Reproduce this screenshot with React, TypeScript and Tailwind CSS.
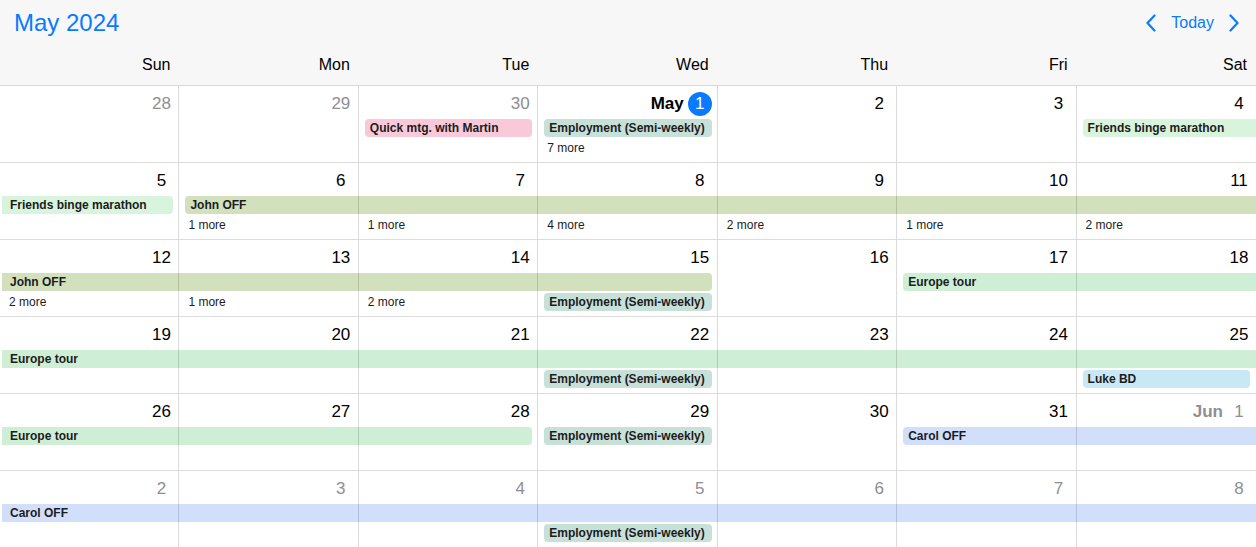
import React from "react";

type Ev = {
  title: string;
  col: number; // 1..7
  span: number;
  row: number; // 1..2
  color: string;
  contL?: boolean;
  contR?: boolean;
};

type Day = { n: string; gray?: boolean; today?: boolean; label?: string };

type Week = { days: Day[]; events: Ev[]; more: { col: number; text: string }[] };

const C = {
  pink: "bg-[#f9c9da]",
  teal: "bg-[#c7e0d8]",
  friends: "bg-[#d8f4dd]",
  john: "bg-[#d3e0bd]",
  europe: "bg-[#ceeed5]",
  luke: "bg-[#c9e8f5]",
  carol: "bg-[#d2dffb]",
};

const colStart = ["", "col-start-1", "col-start-2", "col-start-3", "col-start-4", "col-start-5", "col-start-6", "col-start-7"];
const colSpan = ["", "col-span-1", "col-span-2", "col-span-3", "col-span-4", "col-span-5", "col-span-6", "col-span-7"];
const rowStart = ["", "row-start-1", "row-start-2"];

const d = (n: number, gray = false): Day => ({ n: String(n), gray });

const weeks: Week[] = [
  {
    days: [d(28, true), d(29, true), d(30, true), { n: "1", today: true, label: "May" }, d(2), d(3), d(4)],
    events: [
      { title: "Quick mtg. with Martin", col: 3, span: 1, row: 1, color: C.pink },
      { title: "Employment (Semi-weekly)", col: 4, span: 1, row: 1, color: C.teal },
      { title: "Friends binge marathon", col: 7, span: 1, row: 1, color: C.friends, contR: true },
    ],
    more: [{ col: 4, text: "7 more" }],
  },
  {
    days: [d(5), d(6), d(7), d(8), d(9), d(10), d(11)],
    events: [
      { title: "Friends binge marathon", col: 1, span: 1, row: 1, color: C.friends, contL: true },
      { title: "John OFF", col: 2, span: 6, row: 1, color: C.john, contR: true },
    ],
    more: [
      { col: 2, text: "1 more" },
      { col: 3, text: "1 more" },
      { col: 4, text: "4 more" },
      { col: 5, text: "2 more" },
      { col: 6, text: "1 more" },
      { col: 7, text: "2 more" },
    ],
  },
  {
    days: [d(12), d(13), d(14), d(15), d(16), d(17), d(18)],
    events: [
      { title: "John OFF", col: 1, span: 4, row: 1, color: C.john, contL: true },
      { title: "Europe tour", col: 6, span: 2, row: 1, color: C.europe, contR: true },
      { title: "Employment (Semi-weekly)", col: 4, span: 1, row: 2, color: C.teal },
    ],
    more: [
      { col: 1, text: "2 more" },
      { col: 2, text: "1 more" },
      { col: 3, text: "2 more" },
    ],
  },
  {
    days: [d(19), d(20), d(21), d(22), d(23), d(24), d(25)],
    events: [
      { title: "Europe tour", col: 1, span: 7, row: 1, color: C.europe, contL: true, contR: true },
      { title: "Employment (Semi-weekly)", col: 4, span: 1, row: 2, color: C.teal },
      { title: "Luke BD", col: 7, span: 1, row: 2, color: C.luke },
    ],
    more: [],
  },
  {
    days: [d(26), d(27), d(28), d(29), d(30), d(31), { n: "1", gray: true, label: "Jun" }],
    events: [
      { title: "Europe tour", col: 1, span: 3, row: 1, color: C.europe, contL: true },
      { title: "Employment (Semi-weekly)", col: 4, span: 1, row: 1, color: C.teal },
      { title: "Carol OFF", col: 6, span: 2, row: 1, color: C.carol, contR: true },
    ],
    more: [],
  },
  {
    days: [d(2, true), d(3, true), d(4, true), d(5, true), d(6, true), d(7, true), d(8, true)],
    events: [
      { title: "Carol OFF", col: 1, span: 7, row: 1, color: C.carol, contL: true, contR: true },
      { title: "Employment (Semi-weekly)", col: 4, span: 1, row: 2, color: C.teal },
    ],
    more: [],
  },
];

const dayNames = ["Sun", "Mon", "Tue", "Wed", "Thu", "Fri", "Sat"];

function DayCell({ day, last }: { day: Day; last: boolean }) {
  return (
    <div className={"h-full " + (last ? "" : "border-r border-[rgba(0,0,0,0.14)]")}>
      <div className="flex h-[24px] items-center justify-end gap-[4px] pr-[5px] mt-[6px]">
        {day.label && (
          <span className={"text-[17px] font-bold " + (day.gray ? "text-[#8e8e93]" : "text-black")}>{day.label}</span>
        )}
        <span
          className={
            "flex h-[24px] w-[24px] items-center justify-center text-[17px] " +
            (day.today ? "rounded-full bg-[#0a7aff] text-white" : day.gray ? "text-[#8e8e93]" : "text-black")
          }
        >
          {day.n}
        </span>
      </div>
    </div>
  );
}

function EventBar({ ev }: { ev: Ev }) {
  const cls = [
    colStart[ev.col],
    colSpan[ev.span],
    rowStart[ev.row],
    ev.color,
    "h-[18px] flex items-center overflow-hidden whitespace-nowrap text-[12px] font-bold text-[#1c1c1e]",
    ev.contL ? "ml-[2px] pl-[8px]" : "ml-[6px] pl-[5px] rounded-l-[4px]",
    ev.contR ? "" : "mr-[6px] rounded-r-[4px]",
  ].join(" ");
  return <div className={cls}>{ev.title}</div>;
}

function ChevronLeft() {
  return (
    <svg width="12" height="18" viewBox="0 0 12 18" fill="none">
      <path d="M9.5 1.5 L2.5 9 L9.5 16.5" stroke="#0a7aff" strokeWidth="2.2" strokeLinecap="round" strokeLinejoin="round" />
    </svg>
  );
}

function ChevronRight() {
  return (
    <svg width="12" height="18" viewBox="0 0 12 18" fill="none">
      <path d="M2.5 1.5 L9.5 9 L2.5 16.5" stroke="#0a7aff" strokeWidth="2.2" strokeLinecap="round" strokeLinejoin="round" />
    </svg>
  );
}

export default function App() {
  return (
    <div className="w-[1256px] h-[547px] overflow-hidden bg-white font-['Liberation_Sans',Arial,sans-serif]">
      <div className="bg-[#f7f7f7] border-b border-[#d9d9d9]">
        <div className="flex h-[45px] items-center justify-between pl-[14px] pr-[16px]">
          <div className="text-[24px] text-[#0a7aff] leading-none">May 2024</div>
          <div className="flex items-center gap-[14px] text-[#0a7aff]">
            <ChevronLeft />
            <span className="text-[16px]">Today</span>
            <ChevronRight />
          </div>
        </div>
        <div className="grid grid-cols-7 h-[40px] items-center">
          {dayNames.map((n) => (
            <div key={n} className="text-right pr-[9px] text-[16px] text-black">
              {n}
            </div>
          ))}
        </div>
      </div>
      {weeks.map((w, wi) => (
        <div key={wi} className={"relative h-[77px] " + (wi < weeks.length - 1 ? "border-b border-[#dcdcdc]" : "")}>
          <div className="absolute left-0 right-0 top-[33px] z-0 grid grid-cols-7 grid-rows-[18px_18px] gap-y-[2px]">
            {w.events.map((ev, i) => (
              <EventBar key={i} ev={ev} />
            ))}
            {w.more.map((m, i) => (
              <div
                key={"m" + i}
                className={colStart[m.col] + " row-start-2 col-span-1 pl-[9px] flex items-center text-[12px] text-[#1c1c1e]"}
              >
                {m.text}
              </div>
            ))}
          </div>
          <div className="relative z-10 grid grid-cols-7 h-full">
            {w.days.map((day, di) => (
              <DayCell key={di} day={day} last={di === 6} />
            ))}
          </div>
        </div>
      ))}
    </div>
  );
}
